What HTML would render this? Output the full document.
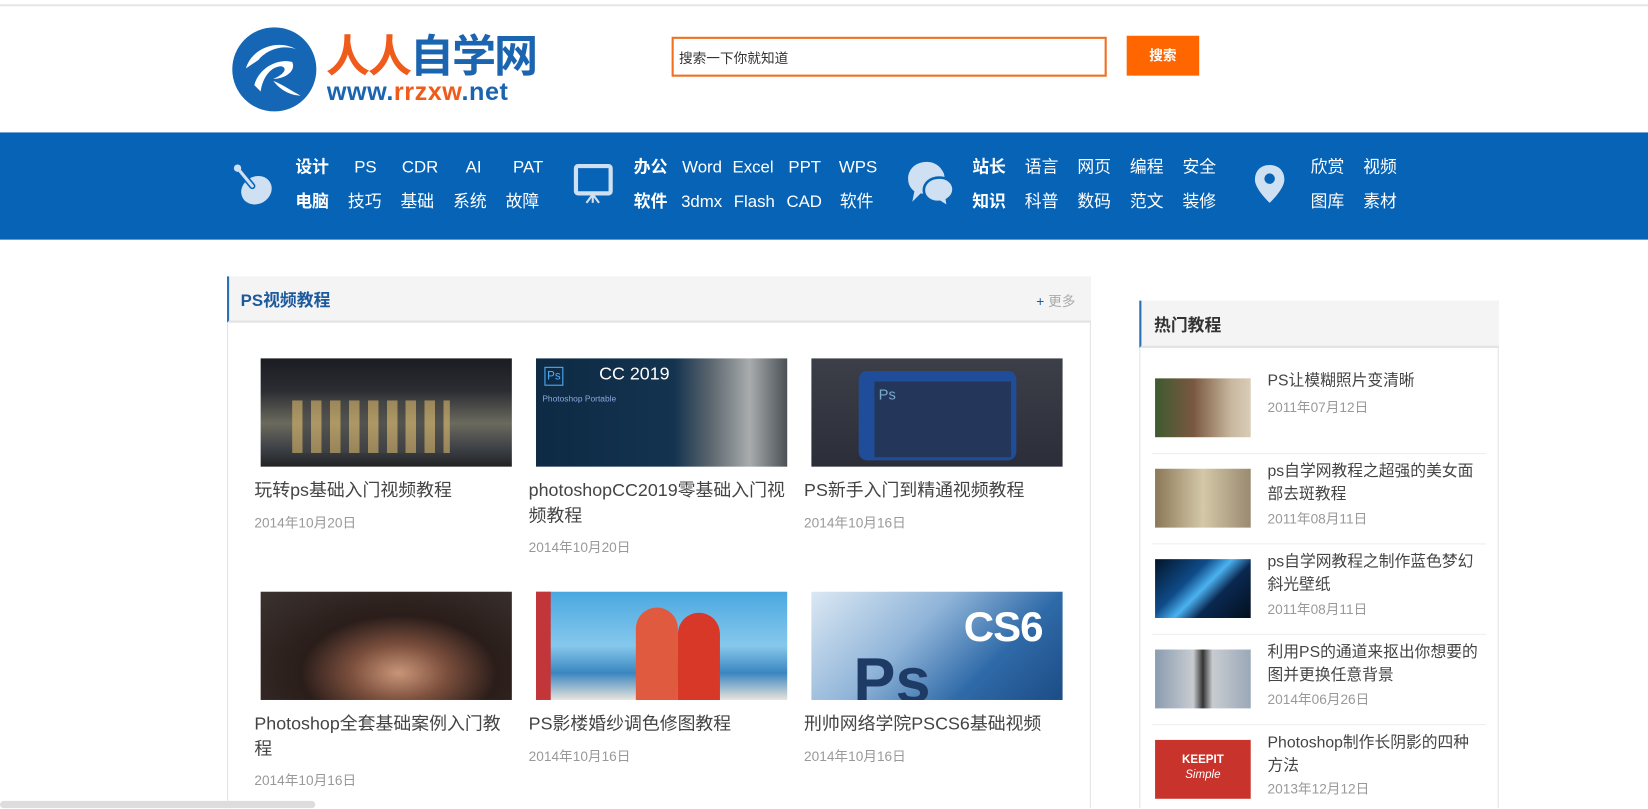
<!DOCTYPE html>
<html><head><meta charset="utf-8">
<style>
*{margin:0;padding:0;box-sizing:border-box}
html,body{width:1648px;height:809px;overflow:hidden;background:#fff}
body{font-family:"Liberation Sans","Noto Sans CJK SC",sans-serif;position:relative}
#w{position:absolute;left:0;top:0;width:1568px;height:769px;overflow:hidden;transform:scale(1.05102);transform-origin:0 0}
.abs{position:absolute}
.nav{left:0;top:126px;width:1568px;height:102px;background:#0763b6}
.nv{color:#fff;font-size:16px;white-space:nowrap}
.nv b{font-weight:bold}
.t{color:#444;font-size:17px;line-height:24px;width:245px}
.d{color:#999;font-size:13px}
.si{position:absolute;left:1099px;width:91px;height:56px}
.st{position:absolute;left:1206px;font-size:15px;color:#444;line-height:22px;width:205px}
.sd{position:absolute;left:1206px;font-size:13px;color:#999}
.sep{position:absolute;left:1096px;width:318px;height:1px;background:#eee}
</style></head><body><div id="w">
<div class="abs" style="left:0;top:4px;width:1568px;height:2px;background:#e6e6e6"></div>
<svg class="abs" style="left:220px;top:25px" width="82" height="82" viewBox="0 0 82 82">
<circle cx="41" cy="41" r="40" fill="#1566b5"/>
<path d="M14 40 C20 20 45 12 62 22 C52 18 36 20 26 32 Z" fill="#fff"/>
<path d="M22 56 C26 40 44 30 58 34 C62 42 52 50 40 50 C50 46 54 40 48 38 C38 38 30 48 28 62 Z" fill="#fff"/>
<path d="M40 52 C50 56 58 62 66 66 C56 66 46 60 40 52Z" fill="#fff"/>
</svg>
<div class="abs" style="left:310px;top:30px;font-size:42px;font-weight:bold;line-height:48px;letter-spacing:-2px"><span style="color:#f05a1a">人人</span><span style="color:#1a64b0">自学网</span></div>
<div class="abs" style="left:311px;top:74px;font-size:24px;font-weight:bold;color:#1a64b0;letter-spacing:0.5px">www.<span style="color:#f05a1a">rrzxw</span>.net</div>
<div class="abs" style="left:639px;top:35px;width:414px;height:38px;border:2px solid #f07020;font-size:13px;color:#333;padding:8px 5px">搜索一下你就知道</div>
<div class="abs" style="left:1072px;top:34px;width:69px;height:38px;background:#ff6600;color:#fff;font-size:13px;font-weight:bold;text-align:center;line-height:37px">搜索</div>
<div class="abs nav"></div>
<svg class="abs" style="left:220px;top:155px" width="42" height="42" viewBox="0 0 42 42"><ellipse cx="24" cy="26" rx="15" ry="13" fill="#cfe0f2" transform="rotate(-30 24 26)"/><line x1="6" y1="5" x2="20" y2="22" stroke="#0763b6" stroke-width="6" stroke-linecap="round"/><line x1="6" y1="5" x2="20" y2="22" stroke="#cfe0f2" stroke-width="3" stroke-linecap="round"/><circle cx="6" cy="5" r="3.5" fill="#cfe0f2"/></svg>
<svg class="abs" style="left:545px;top:155px" width="40" height="40" viewBox="0 0 40 40"><rect x="3" y="3" width="33" height="26" rx="2" fill="none" stroke="#cfe0f2" stroke-width="4"/><path d="M19 30 L13 38 M19 30 L25 38 M19 30 L19 38" stroke="#cfe0f2" stroke-width="2"/></svg>
<svg class="abs" style="left:862px;top:152px" width="48" height="46" viewBox="0 0 48 46"><path d="M20 2 C8 2 2 10 2 18 C2 24 5 28 8 30 L6 40 L14 32 C18 33 24 33 28 31 C36 27 38 20 36 13 C33 6 27 2 20 2Z" fill="#cfe0f2"/><path d="M32 17 C22 17 17 23 17 29 C17 36 24 41 32 40 L40 45 L39 38 C44 35 46 31 45 26 C44 21 39 17 32 17Z" fill="#cfe0f2" stroke="#0763b6" stroke-width="2.5"/></svg>
<svg class="abs" style="left:1192px;top:155px" width="32" height="40" viewBox="0 0 32 40"><path d="M16 2 C7 2 2 8 2 16 C2 25 16 38 16 38 C16 38 30 25 30 16 C30 8 25 2 16 2Z" fill="#cfe0f2"/><circle cx="16" cy="15" r="5" fill="#0763b6"/></svg>
<div class="abs nv" style="left:281px;top:145px"><b>设计</b><span style="margin-left:24px">PS</span><span style="margin-left:24px">CDR</span><span style="margin-left:26px">AI</span><span style="margin-left:30px">PAT</span></div>
<div class="abs nv" style="left:281px;top:178px"><b>电脑</b><span style="margin-left:18px">技巧</span><span style="margin-left:18px">基础</span><span style="margin-left:18px">系统</span><span style="margin-left:18px">故障</span></div>
<div class="abs nv" style="left:603px;top:145px"><b>办公</b><span style="margin-left:14px">Word</span><span style="margin-left:10px">Excel</span><span style="margin-left:14px">PPT</span><span style="margin-left:17px">WPS</span></div>
<div class="abs nv" style="left:603px;top:178px"><b>软件</b><span style="margin-left:13px">3dmx</span><span style="margin-left:11px">Flash</span><span style="margin-left:11px">CAD</span><span style="margin-left:17px">软件</span></div>
<div class="abs nv" style="left:925px;top:145px"><b>站长</b><span style="margin-left:18px">语言</span><span style="margin-left:18px">网页</span><span style="margin-left:18px">编程</span><span style="margin-left:18px">安全</span></div>
<div class="abs nv" style="left:925px;top:178px"><b>知识</b><span style="margin-left:18px">科普</span><span style="margin-left:18px">数码</span><span style="margin-left:18px">范文</span><span style="margin-left:18px">装修</span></div>
<div class="abs nv" style="left:1247px;top:145px">欣赏<span style="margin-left:18px">视频</span></div>
<div class="abs nv" style="left:1247px;top:178px">图库<span style="margin-left:18px">素材</span></div>
<div class="abs" style="left:216px;top:263px;width:822px;height:520px;border-left:1px solid #e4e4e4;border-right:1px solid #e4e4e4"></div>
<div class="abs" style="left:216px;top:263px;width:822px;height:44px;background:#f4f4f4;border-left:2px solid #2a6fb5;border-bottom:2px solid #e2e2e2"></div>
<div class="abs" style="left:229px;top:272px;font-size:16px;font-weight:bold;color:#1d5a9c">PS视频教程</div>
<div class="abs" style="left:986px;top:276px;font-size:13px;color:#aaa"><span style="color:#1d5a9c">+</span> 更多</div>
<div class="abs" style="left:248px;top:341px;width:239px;height:103px;background:linear-gradient(180deg,#1a1c22 0%,#2b2d33 30%,#6b6a5e 60%,#3a3e44 85%,#222 100%)"><div style="position:absolute;left:30px;top:40px;width:150px;height:50px;background:repeating-linear-gradient(90deg,#d9b66a 0 10px,#444 10px 18px);opacity:.6"></div></div>
<div class="abs" style="left:510px;top:341px;width:239px;height:103px;background:linear-gradient(90deg,#0e2a44 0%,#13334f 55%,#5e6870 70%,#a8acad 85%,#4a5055 100%)"><div style="position:absolute;left:8px;top:8px;width:18px;height:18px;border:1px solid #4fb0ff;color:#4fb0ff;font-size:11px;text-align:center;line-height:16px">Ps</div><div style="position:absolute;left:60px;top:5px;color:#fff;font-size:17px">CC 2019</div><div style="position:absolute;left:6px;top:34px;color:#8ad;font-size:8px">Photoshop Portable</div></div>
<div class="abs" style="left:772px;top:341px;width:239px;height:103px;background:linear-gradient(180deg,#3c3f48,#2b2e38)"><div style="position:absolute;left:45px;top:12px;width:150px;height:85px;background:#1f4d99;border-radius:8px"></div><div style="position:absolute;left:60px;top:22px;width:130px;height:72px;background:#24375a;color:#7ac;font-size:14px;padding:4px">Ps</div></div>
<div class="abs t" style="left:242px;top:455px">玩转ps基础入门视频教程</div>
<div class="abs d" style="left:242px;top:487px">2014年10月20日</div>
<div class="abs t" style="left:503px;top:455px">photoshopCC2019零基础入门视频教程</div>
<div class="abs d" style="left:503px;top:510px">2014年10月20日</div>
<div class="abs t" style="left:765px;top:455px">PS新手入门到精通视频教程</div>
<div class="abs d" style="left:765px;top:487px">2014年10月16日</div>
<div class="abs" style="left:248px;top:563px;width:239px;height:103px;background:radial-gradient(ellipse at 55% 75%,#c99578 0%,#7a4e3c 25%,#2a1d1a 50%,#3b3330 100%)"></div>
<div class="abs" style="left:510px;top:563px;width:239px;height:103px;background:linear-gradient(180deg,#4aa8e0 0%,#86c8ec 50%,#3a86c0 75%,#e8e4dc 100%)"><div style="position:absolute;left:0;top:0;width:14px;height:103px;background:#c2363a"></div><div style="position:absolute;left:95px;top:15px;width:40px;height:88px;background:#e05a40;border-radius:20px 20px 0 0"></div><div style="position:absolute;left:135px;top:20px;width:40px;height:83px;background:#d83828;border-radius:20px 20px 0 0"></div></div>
<div class="abs" style="left:772px;top:563px;width:239px;height:103px;overflow:hidden;background:linear-gradient(135deg,#dbe8f4 0%,#8fb4d8 40%,#2f6aa8 70%,#1c4c86 100%)"><div style="position:absolute;left:145px;top:12px;color:#fff;font-size:40px;font-weight:bold;letter-spacing:-1px">CS6</div><div style="position:absolute;left:40px;top:55px;color:#1e3b66;font-size:60px;font-weight:bold;line-height:60px">Ps</div></div>
<div class="abs t" style="left:242px;top:677px">Photoshop全套基础案例入门教程</div>
<div class="abs d" style="left:242px;top:732px">2014年10月16日</div>
<div class="abs t" style="left:503px;top:677px">PS影楼婚纱调色修图教程</div>
<div class="abs d" style="left:503px;top:709px">2014年10月16日</div>
<div class="abs t" style="left:765px;top:677px">刑帅网络学院PSCS6基础视频</div>
<div class="abs d" style="left:765px;top:709px">2014年10月16日</div>
<div class="abs" style="left:1084px;top:286px;width:342px;height:500px;border-left:1px solid #e4e4e4;border-right:1px solid #e4e4e4"></div>
<div class="abs" style="left:1084px;top:286px;width:342px;height:45px;background:#f4f4f4;border-left:2px solid #2a6fb5;border-bottom:2px solid #e2e2e2"></div>
<div class="abs" style="left:1098px;top:296px;font-size:16px;font-weight:bold;color:#333">热门教程</div>
<div class="si" style="top:360px;background:linear-gradient(90deg,#3e5a30,#7a5840 40%,#c9b8a0 80%,#d8cdb8)"></div>
<div class="st" style="top:352px">PS让模糊照片变清晰</div><div class="sd" style="top:377px">2011年07月12日</div>
<div class="sep" style="top:431px"></div>
<div class="si" style="top:446px;background:linear-gradient(90deg,#8a7858,#d4c8a8 50%,#9a8a70)"></div>
<div class="st" style="top:438px">ps自学网教程之超强的美女面部去斑教程</div><div class="sd" style="top:483px">2011年08月11日</div>
<div class="sep" style="top:517px"></div>
<div class="si" style="top:532px;background:linear-gradient(135deg,#021428 0%,#0f4c8a 35%,#4ab2f0 50%,#0a2850 65%,#02101e 100%)"></div>
<div class="st" style="top:524px">ps自学网教程之制作蓝色梦幻斜光壁纸</div><div class="sd" style="top:569px">2011年08月11日</div>
<div class="sep" style="top:603px"></div>
<div class="si" style="top:618px;background:linear-gradient(90deg,#8a9cb0,#c8ccd0 40%,#333 50%,#c8ccd0 60%,#9aa8b8)"></div>
<div class="st" style="top:610px">利用PS的通道来抠出你想要的图并更换任意背景</div><div class="sd" style="top:655px">2014年06月26日</div>
<div class="sep" style="top:689px"></div>
<div class="si" style="top:704px;background:#c8342c;color:#fff;font-size:11px;font-weight:bold;text-align:center;padding-top:12px;line-height:14px">KEEPIT<br><i style="font-weight:normal">Simple</i></div>
<div class="st" style="top:696px">Photoshop制作长阴影的四种方法</div><div class="sd" style="top:740px">2013年12月12日</div>
<div class="abs" style="left:0;top:762px;width:300px;height:7px;background:#ddd;border-radius:4px"></div>
</div></body></html>
